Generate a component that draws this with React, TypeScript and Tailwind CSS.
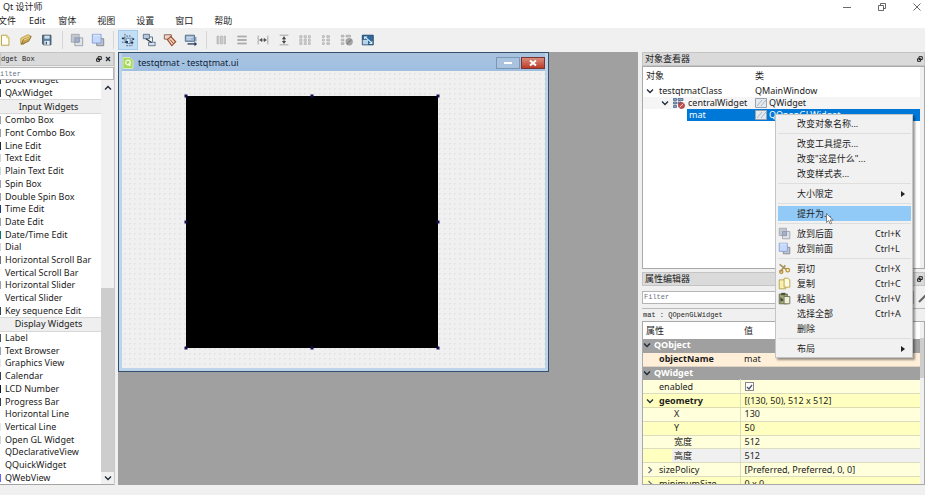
import React from 'react';

type WidgetRow = { label: string; header?: boolean; icon?: string };

const widgetRows: WidgetRow[] = [
  { label: 'Dock Widget', icon: 'bg-gray-700' },
  { label: 'QAxWidget', icon: 'bg-gray-700' },
  { label: 'Input Widgets', header: true },
  { label: 'Combo Box', icon: 'bg-gray-400' },
  { label: 'Font Combo Box', icon: 'bg-gray-400' },
  { label: 'Line Edit', icon: 'bg-gray-800' },
  { label: 'Text Edit', icon: 'bg-gray-300' },
  { label: 'Plain Text Edit', icon: 'bg-gray-300' },
  { label: 'Spin Box', icon: 'bg-gray-400' },
  { label: 'Double Spin Box', icon: 'bg-gray-400' },
  { label: 'Time Edit', icon: 'bg-blue-900' },
  { label: 'Date Edit', icon: 'bg-gray-400' },
  { label: 'Date/Time Edit', icon: 'bg-teal-700' },
  { label: 'Dial', icon: 'bg-gray-300' },
  { label: 'Horizontal Scroll Bar', icon: 'bg-gray-500' },
  { label: 'Vertical Scroll Bar' },
  { label: 'Horizontal Slider', icon: 'bg-gray-400' },
  { label: 'Vertical Slider' },
  { label: 'Key sequence Edit', icon: 'bg-gray-700' },
  { label: 'Display Widgets', header: true },
  { label: 'Label', icon: 'bg-gray-600' },
  { label: 'Text Browser', icon: 'bg-gray-400' },
  { label: 'Graphics View', icon: 'bg-gray-200' },
  { label: 'Calendar', icon: 'bg-gray-700' },
  { label: 'LCD Number', icon: 'bg-gray-900' },
  { label: 'Progress Bar', icon: 'bg-gray-700' },
  { label: 'Horizontal Line' },
  { label: 'Vertical Line', icon: 'bg-gray-200' },
  { label: 'Open GL Widget', icon: 'bg-gray-300' },
  { label: 'QDeclarativeView' },
  { label: 'QQuickWidget' },
  { label: 'QWebView', icon: 'bg-indigo-500' },
];

type MenuEntry = {
  label: string;
  shortcut?: string;
  icon?: React.ReactNode;
  submenu?: boolean;
  active?: boolean;
};

const Icon: React.FC<{ children: React.ReactNode }> = ({ children }) => (
  <svg viewBox="0 0 16 16" className="w-4 h-4 shrink-0" fill="none" aria-hidden="true">
    {children}
  </svg>
);

const NewIcon = () => (
  <Icon>
    <path d="M4 2.5h6l2.500 3v8.500h-8.500z" fill="#fffef0" stroke="#b39a35" />
    <path d="M10 2.500v3h2.500" stroke="#d9c05a" />
  </Icon>
);

const OpenIcon = () => (
  <Icon>
    <path d="M2 6l8-4 3 1v3l-8 7-3-1z" fill="#e9cf7c" stroke="#a98a3c" strokeWidth=".8" />
    <path d="M2.500 13L5 7.500l9-3.500-3 5.500z" fill="#c9a24a" stroke="#7a5f22" strokeWidth=".8" />
    <path d="M5.500 8l7-3" stroke="#f6e3a2" />
  </Icon>
);

const SaveIcon = () => (
  <Icon>
    <path d="M3 2.500h9.500v11H4l-1-1z" fill="#5d7f9e" stroke="#2d4358" />
    <path d="M5 3h6v3.500H5z" fill="#cfe0ea" />
    <path d="M5 9h6v4.500H5z" fill="#e8f0f5" />
    <path d="M6.500 10h1.500v3h-1.500z" fill="#34506a" />
  </Icon>
);

const SendBackIcon = () => (
  <Icon>
    <path d="M5.500 5.500h9v9h-9z" fill="#dfe2e6" stroke="#9a9da4" />
    <path d="M1.500 1.500h9v9h-9z" fill="#c3c7ce" stroke="#a3a6ad" />
    <path d="M5.500 5.500h5v5h-5z" fill="#a4b1cc" stroke="#8b97b0" />
  </Icon>
);

const BringFrontIcon = () => (
  <Icon>
    <path d="M6.500 6.500h8v8h-8z" fill="#c0c4cc" stroke="#7c8088" />
    <path d="M1.500 1.500h10v10h-10z" fill="#c6d9fc" stroke="#7c9bd8" />
    <path d="M2.500 2.500h8" stroke="#e6efff" />
  </Icon>
);

const EditWidgetsIcon = () => (
  <Icon>
    <path d="M4.500 1v10M1 10.500h7M6 3.500h6M12.500 5v10M6 14.500h6" stroke="#3f5c7c" strokeDasharray="2 1" />
    <path d="M6 6h4.500v6H6z" fill="#d7e6f4" stroke="#4b6a8c" strokeWidth=".8" />
    <path d="M1 5h3v2H1zM13 6h2v2h-2zM5 9h3v2.500H5zM11 10h3v2h-3z" fill="#233d5e" />
  </Icon>
);

const SignalsIcon = () => (
  <Icon>
    <path d="M1.500 1.500h7v5h-7z" fill="#b9c9dc" stroke="#566b84" />
    <path d="M7.500 10.500h7.500v4H7.500z" fill="#d5e0ec" stroke="#566b84" />
    <path d="M4.500 6.500L11 11" stroke="#1f3048" strokeWidth="1.300" />
    <path d="M8.500 4.500H12V10" stroke="#4d6682" />
  </Icon>
);

const BuddiesIcon = () => (
  <Icon>
    <path d="M1.500 2h8v5h-8z" fill="#e9d6cc" stroke="#8d5540" />
    <path d="M5 7.500l4-3.500 5.500 6-4.500 4.500z" fill="#f4d0b6" stroke="#9a4b30" strokeWidth="1.300" />
    <path d="M8 7.500l3.500 4" stroke="#7a3f2b" />
  </Icon>
);

const TabOrderIcon = () => (
  <Icon>
    <path d="M1.500 2.500h10.500v7H1.500z" fill="#9db8d4" stroke="#4c6786" />
    <path d="M3 5h7M3 7h5" stroke="#d7e5f2" />
    <path d="M4 12.500h9" stroke="#203a5a" strokeWidth="1.500" />
    <path d="M12 10l3 2.500-3 2.500z" fill="#203a5a" />
    <path d="M13.500 4.500v5" stroke="#4c6786" />
  </Icon>
);

const HLayoutIcon = () => (
  <Icon>
    <path d="M3.500 3.500h2v9h-2zM7.500 3.500h2v9h-2zM11.500 3.500h1.500v9h-1.500z" stroke="#b3b3b3" fill="#d4d4d4" />
  </Icon>
);

const VLayoutIcon = () => (
  <Icon>
    <path d="M3 3.500h10v1H3zM3 7.500h10v1H3zM3 11.500h10v1H3z" stroke="#a3a3a3" fill="#d4d4d4" />
  </Icon>
);

const HSplitIcon = () => (
  <Icon>
    <path d="M2.500 3v10M13.500 3v10" stroke="#999" />
    <path d="M4 8h8" stroke="#555" />
    <path d="M7 5.500v5L4 8zM9 5.500v5L12 8z" fill="#555" />
  </Icon>
);

const VSplitIcon = () => (
  <Icon>
    <path d="M3 2.500h10M3 13.500h10" stroke="#999" />
    <path d="M8 4v8" stroke="#444" />
    <path d="M5.500 7h5L8 4zM5.500 9h5L8 12z" fill="#444" />
  </Icon>
);

const GridIcon = () => (
  <Icon>
    <path d="M2 3h2.500v2.500H2zM7 3h2.500v2.500H7zM12 3h2v2.500h-2zM2 7h2.500v2.500H2zM7 7h2.500v2.500H7zM12 7h2v2.500h-2zM2 11h2.500v2H2zM7 11h2.500v2H7zM12 11h2v2h-2z" fill="#d8d8d8" stroke="#aaa" strokeWidth=".8" />
  </Icon>
);

const FormLayoutIcon = () => (
  <Icon>
    <path d="M4 3h2v2H4zM9 3h3v2H9zM4 7h2v2H4zM9 7h3v2H9zM4 11h2v2H4zM9 11h3v2H9z" fill="#cfcfcf" stroke="#aaa" strokeWidth=".8" />
  </Icon>
);

const BreakLayoutIcon = () => (
  <Icon>
    <path d="M1.500 2.500h3v2h-3zM7 2.500h5v2H7zM1.500 7h3v2h-3zM1.500 11h3v2h-3z" fill="#c9c9c9" stroke="#a5a5a5" strokeWidth=".8" />
    <circle cx="10.500" cy="10" r="4.200" fill="#a3a3a3" />
    <path d="M8 12.500l5-5" stroke="#858585" strokeWidth="1.500" />
  </Icon>
);

const AdjustSizeIcon = () => (
  <Icon>
    <path d="M1.500 2.500h12.500v11H1.500z" fill="#316a9c" stroke="#1d4268" />
    <path d="M2 8h6v5H2z" fill="#b8d3e8" />
    <path d="M5 5l7 6" stroke="#e6f2fb" strokeWidth="1.300" />
    <path d="M3.500 4h4l-4 3.500z" fill="#e6f2fb" />
    <path d="M13 12.500H9l4-3.500z" fill="#e6f2fb" />
  </Icon>
);

const CutIcon = () => (
  <Icon>
    <path d="M2 3l8 6M3 12l6-8" stroke="#a58f55" strokeWidth="1.800" />
    <circle cx="4" cy="12" r="2" stroke="#b98f2c" strokeWidth="1.500" />
    <circle cx="12" cy="10" r="2.200" stroke="#b98f2c" strokeWidth="1.500" />
  </Icon>
);

const CopyIcon = () => (
  <Icon>
    <path d="M1.500 3.500h6l2 2v9h-8z" fill="#f9efb0" stroke="#b39a35" />
    <path d="M7.500 1.500h4.500l2.500 2v9h-7z" fill="#fffbe0" stroke="#b39a35" />
  </Icon>
);

const PasteIcon = () => (
  <Icon>
    <path d="M1.500 2.500h10v12h-10z" fill="#a3a878" stroke="#5a6040" />
    <path d="M4 1h5v3H4z" fill="#4b5138" />
    <path d="M7.500 5.500h7v9h-7z" fill="#f0f0d8" stroke="#5f6548" />
    <path d="M3 6l4 4-4 2z" fill="#3b4a38" />
  </Icon>
);

const WidgetClassIcon = () => (
  <svg viewBox="0 0 12 10" className="w-3 h-[10px] shrink-0" fill="none" aria-hidden="true">
    <path d="M.5.500h11v9H.5z" fill="#e4e9ee" stroke="#9aa3ad" />
    <path d="M2 8l5-6M6 8l5-6" stroke="#a7b5c3" />
  </svg>
);

const CentralIcon = () => (
  <svg viewBox="0 0 12 12" className="w-3 h-3 shrink-0" fill="none" aria-hidden="true">
    <path d="M.5 1.500h3v2h-3zM5 1.500h5v2H5zM.5 5h3v2h-3zM.5 8.500h3v2h-3zM5 5h3v2H5z" fill="#8fa5c6" stroke="#4f658c" strokeWidth=".8" />
    <circle cx="8.500" cy="8.500" r="3" fill="#c9504c" stroke="#8d2a2a" strokeWidth=".7" />
    <path d="M6.500 10.500l4-4" stroke="#f3c9c9" />
  </svg>
);

const Chevron: React.FC<{ className?: string; d?: string }> = ({
  className = 'text-gray-800',
  d = 'M1 2.500l3 3 3-3',
}) => (
  <svg viewBox="0 0 8 8" className={`w-2 h-2 shrink-0 ${className}`} fill="none" stroke="currentColor" strokeWidth="1.300" aria-hidden="true">
    <path d={d} />
  </svg>
);

const CaptionIcon: React.FC<{ d: string }> = ({ d }) => (
  <svg viewBox="0 0 8 8" className="w-2 h-2" fill="none" stroke="#444" strokeWidth=".8" aria-hidden="true">
    <path d={d} />
  </svg>
);

const FloatIcon = () => (
  <svg viewBox="0 0 6 6" className="w-[6px] h-[6px]" fill="none" stroke="#222" aria-hidden="true">
    <path d="M2 .7h3.300v2.800H2zM.6 2.700h3v2.600h-3z" />
  </svg>
);

const contextMenu: MenuEntry[][] = [
  [{ label: '改变对象名称...' }],
  [{ label: '改变工具提示...' }, { label: '改变"这是什么"...' }, { label: '改变样式表...' }],
  [{ label: '大小限定', submenu: true }],
  [{ label: '提升为...', active: true }],
  [
    { label: '放到后面', shortcut: 'Ctrl+K', icon: <SendBackIcon /> },
    { label: '放到前面', shortcut: 'Ctrl+L', icon: <BringFrontIcon /> },
  ],
  [
    { label: '剪切', shortcut: 'Ctrl+X', icon: <CutIcon /> },
    { label: '复制', shortcut: 'Ctrl+C', icon: <CopyIcon /> },
    { label: '粘贴', shortcut: 'Ctrl+V', icon: <PasteIcon /> },
    { label: '选择全部', shortcut: 'Ctrl+A' },
    { label: '删除' },
  ],
  [{ label: '布局', submenu: true }],
];

const toolbarGroups = [
  [
    { name: '新建', icon: <NewIcon /> },
    { name: '打开', icon: <OpenIcon /> },
    { name: '保存', icon: <SaveIcon /> },
  ],
  [
    { name: '放到后面', icon: <SendBackIcon /> },
    { name: '放到前面', icon: <BringFrontIcon /> },
  ],
  [
    { name: '编辑控件', icon: <EditWidgetsIcon />, active: true },
    { name: '编辑信号/槽', icon: <SignalsIcon /> },
    { name: '编辑伙伴', icon: <BuddiesIcon /> },
    { name: '编辑Tab顺序', icon: <TabOrderIcon /> },
  ],
  [
    { name: '水平布局', icon: <HLayoutIcon /> },
    { name: '垂直布局', icon: <VLayoutIcon /> },
    { name: '水平分裂器', icon: <HSplitIcon /> },
    { name: '垂直分裂器', icon: <VSplitIcon /> },
    { name: '栅格布局', icon: <GridIcon /> },
    { name: '表单布局', icon: <FormLayoutIcon /> },
    { name: '打破布局', icon: <BreakLayoutIcon /> },
    { name: '调整大小', icon: <AdjustSizeIcon /> },
  ],
];

const properties = [
  { name: 'X', value: '130', bg: 'bg-[#ffffdc]' },
  { name: 'Y', value: '50', bg: 'bg-[#ffffbf]' },
  { name: '宽度', value: '512', bg: 'bg-[#ffffdc]' },
];

const DockTitle: React.FC<{ title: string; mono?: boolean; closable?: boolean }> = ({ title, mono, closable }) => (
  <div className="flex h-[14px] shrink-0 items-center justify-between border border-[#c4c4c4] bg-[#dadada] pr-px">
    <h2 className={mono ? "font-['Liberation_Mono',monospace] text-[7px]" : 'pl-[2px]'}>{title}</h2>
    <div className="flex items-center gap-[2px]">
      <button type="button" aria-label="浮动" className="flex">
        <FloatIcon />
      </button>
      {closable && (
        <button type="button" aria-label="关闭" className="flex">
          <Chevron d="M2 2l4 4M6 2l-4 4" />
        </button>
      )}
    </div>
  </div>
);

const WidgetBox = () => (
  <aside className="flex w-[115px] shrink-0 flex-col border-r border-[#c8c8c8]">
    <DockTitle title="dget Box" mono closable />
    <input
      aria-label="Filter"
      placeholder="ilter"
      className="mt-px h-[13px] shrink-0 border border-l-0 border-[#b5b5b5] bg-white px-0 font-['Liberation_Mono',monospace] text-[7px] placeholder-gray-500 outline-none"
    />
    <div className="flex min-h-0 flex-1 overflow-hidden border-b border-[#a5a5a5] bg-white">
      <ul className="flex flex-1 flex-col">
        {widgetRows.map((row) => (
          <li
            key={row.label}
            className={`flex min-h-0 flex-1 items-center whitespace-nowrap first:-mt-[6px] ${
              row.header ? 'justify-center border-y border-[#d8d8d8] bg-[#efefef] pr-1' : 'gap-1'
            }`}
          >
            {!row.header && <span className={`h-2 w-px ${row.icon || ''}`} />}
            {row.label}
          </li>
        ))}
      </ul>
      <div className="flex w-[13px] shrink-0 flex-col items-center bg-[#f0f0f0]">
        <div className="flex h-4 items-center">
          <Chevron d="M1 5.500l3-3 3 3" />
        </div>
        <div className="mt-2 flex-1" />
        <div className="w-full flex-1 bg-[#cdcdcd]" />
        <div className="flex h-3 items-center">
          <Chevron />
        </div>
      </div>
    </div>
  </aside>
);

const handles = [
  'left-0 top-0',
  'left-1/2 top-0',
  'left-full top-0',
  'left-0 top-1/2',
  'left-full top-1/2',
  'left-0 top-full',
  'left-1/2 top-full',
  'left-full top-full',
];

const FormWindow = () => (
  <section className="absolute left-0 top-0 flex h-[320px] w-[431px] flex-col border border-[#33506f] bg-[#bcd3ea] px-[3px] pb-[3px]">
    <header className="flex h-[18px] shrink-0 items-center bg-linear-to-b from-[#a9c3df] to-[#9fbfe1] pt-[2px]">
      <svg viewBox="0 0 12 12" className="mr-1 h-3 w-3" fill="none" aria-hidden="true">
        <path d="M1 .5h7l3 3v8H1z" fill="#a6d85a" stroke="#d5ecb4" />
        <circle cx="6" cy="5.500" r="2.300" stroke="#f4fbe8" strokeWidth="1.300" />
        <path d="M6.500 6.500l2 2.500" stroke="#f4fbe8" strokeWidth="1.300" />
      </svg>
      <h2 className="flex-1 text-[#14253a]">testqtmat - testqtmat.ui</h2>
      <button type="button" aria-label="最小化" className="mr-px flex h-3 w-6 items-center justify-center border border-[#7c97b5] bg-[#a9c2de]">
        <span className="h-[2px] w-2 bg-white" />
      </button>
      <button type="button" aria-label="关闭" className="flex h-3 w-6 items-center justify-center border border-[#7a3430] bg-linear-to-b from-[#d98a7b] to-[#bb3a28]">
        <svg viewBox="0 0 8 8" className="h-2 w-2" stroke="#fff" strokeWidth="2" aria-hidden="true">
          <path d="M1 1.500l6 5M7 1.500l-6 5" />
        </svg>
      </button>
    </header>
    <div className="relative flex-1 bg-[#f0f0f0] bg-[radial-gradient(#e4e4e4_1px,transparent_1px)] bg-size-[5px_5px]">
      <div className="absolute left-[64px] top-[25px] h-[252px] w-[252px] bg-black">
        {handles.map((pos) => (
          <span key={pos} className={`absolute h-[3px] w-[3px] -translate-x-1/2 -translate-y-1/2 bg-[#10104a] ${pos}`} />
        ))}
      </div>
    </div>
  </section>
);

const ObjectInspector = () => (
  <section className="flex h-[217px] shrink-0 flex-col">
    <DockTitle title="对象查看器" />
    <div className="flex flex-1 border border-[#a9a9a9] bg-white">
      <div className="flex-1">
        <table className="w-full table-fixed border-collapse leading-[12px]">
          <thead>
            <tr className="h-[18px]">
              <th className="w-[112px] pl-[3px] text-left font-normal">对象</th>
              <th className="text-left font-normal">类</th>
            </tr>
          </thead>
          <tbody>
            <tr className="h-3">
              <td className="p-0">
                <span className="flex items-center gap-[5px] pl-[3px]">
                  <Chevron />
                  testqtmatClass
                </span>
              </td>
              <td className="p-0">QMainWindow</td>
            </tr>
            <tr className="h-3 bg-[#f5f5f5]">
              <td className="p-0">
                <span className="flex items-center gap-[3px] pl-[18px]">
                  <Chevron className="mr-px text-gray-800" />
                  <CentralIcon />
                  centralWidget
                </span>
              </td>
              <td className="p-0">
                <span className="flex items-center gap-[2px]">
                  <WidgetClassIcon />
                  QWidget
                </span>
              </td>
            </tr>
            <tr className="h-3 text-white">
              <td className="p-0 pl-11">
                <span className="block bg-[#0078d7] pl-[2px]">mat</span>
              </td>
              <td className="bg-[#0078d7] p-0">
                <span className="flex items-center gap-[2px]">
                  <WidgetClassIcon />
                  QOpenGLWidget
                </span>
              </td>
            </tr>
          </tbody>
        </table>
      </div>
      <div className="w-1 shrink-0 bg-[#f0f0f0]" />
    </div>
  </section>
);

const PropertyEditor = () => (
  <section className="mt-[3px] flex min-h-0 flex-1 flex-col">
    <DockTitle title="属性编辑器" />
    <div className="flex h-[22px] shrink-0 items-center gap-1">
      <input
        aria-label="属性过滤"
        placeholder="Filter"
        className="h-[13px] min-w-0 flex-1 border border-[#b5b5b5] bg-white px-px font-['Liberation_Mono',monospace] text-[7px] placeholder-gray-500 outline-none"
      />
      <button type="button" aria-label="配置" className="mr-[-3px]">
        <svg viewBox="0 0 10 12" className="h-3 w-[10px]" fill="none" aria-hidden="true">
          <path d="M1 11l8-8" stroke="#666" strokeWidth="2" />
        </svg>
      </button>
    </div>
    <p className="h-[13px] shrink-0 border-t border-[#b9b9b9] px-px font-['Liberation_Mono',monospace] text-[7px] leading-[12px]">
      mat : QOpenGLWidget
    </p>
    <div className="flex min-h-0 flex-1 overflow-hidden border border-[#a9a9a9]">
      <div className="min-w-0 flex-1 overflow-hidden">
        <table className="h-[169px] w-full table-fixed border-collapse leading-[12px]">
          <thead>
            <tr className="h-[17px] bg-white">
              <th className="w-[97px] p-0 pl-[3px] text-left font-normal">属性</th>
              <th className="p-0 pl-1 text-left font-normal">值</th>
            </tr>
          </thead>
          <tbody>
            <tr className="border-b border-[#a0a0a0] bg-[#a0a0a0] text-white">
              <th colSpan={2} className="p-0 text-left">
                <span className="flex items-center gap-[3px]">
                  <Chevron />
                  QObject
                </span>
              </th>
            </tr>
            <tr className="border-b border-[#e0d4c0] bg-[#ffefd9]">
              <th className="p-0 pl-4 text-left">objectName</th>
              <td className="p-0 pl-1">mat</td>
            </tr>
            <tr className="border-b border-[#a0a0a0] bg-[#a0a0a0] text-white">
              <th colSpan={2} className="p-0 text-left">
                <span className="flex items-center gap-[3px]">
                  <Chevron />
                  QWidget
                </span>
              </th>
            </tr>
            <tr className="border-b border-[#dcdcc0] bg-[#ffffdc]">
              <td className="p-0 pl-4">
                <label htmlFor="enabled">enabled</label>
              </td>
              <td className="border-l border-[#dcdcc0] p-0 pl-1">
                <span className="flex h-3 items-center">
                  <input
                    id="enabled"
                    type="checkbox"
                    defaultChecked
                    className="peer h-[9px] w-[9px] appearance-none border border-[#888] bg-white"
                  />
                  <Chevron className="pointer-events-none -ml-[9px] hidden text-gray-600 peer-checked:block" d="M2 4l2 2 3-4" />
                </span>
              </td>
            </tr>
            <tr className="border-b border-[#dcdcb0] bg-[#ffffbf]">
              <th className="p-0 text-left">
                <span className="flex items-center gap-[5px] pl-[3px]">
                  <Chevron />
                  geometry
                </span>
              </th>
              <td className="border-l border-[#dcdcc0] p-0 pl-1">[(130, 50), 512 x 512]</td>
            </tr>
            {properties.map((prop) => (
              <tr key={prop.name} className={`border-b border-[#dcdcc0] ${prop.bg}`}>
                <td className="p-0 pl-[31px]">{prop.name}</td>
                <td className="border-l border-[#dcdcc0] p-0 pl-1">{prop.value}</td>
              </tr>
            ))}
            <tr className="border-b border-[#dcdcc0] bg-[#f0f0f0]">
              <td className="bg-linear-to-r from-[#ffffbf] from-30% to-[#f0f0f0] to-30% p-0 pl-[31px]">高度</td>
              <td className="border-l border-[#dcdcc0] p-0 pl-1">512</td>
            </tr>
            <tr className="border-b border-[#dcdcc0] bg-[#ffffdc]">
              <td className="p-0">
                <span className="flex items-center gap-[5px] pl-[3px]">
                  <Chevron className="text-gray-500" d="M2.500 1l3 3-3 3" />
                  sizePolicy
                </span>
              </td>
              <td className="border-l border-[#dcdcc0] p-0 pl-1">[Preferred, Preferred, 0, 0]</td>
            </tr>
            <tr className="border-b border-[#dcdcc0] bg-[#ffffbf]">
              <td className="p-0">
                <span className="flex items-center gap-[5px] pl-[3px]">
                  <Chevron className="text-gray-500" d="M2.500 1l3 3-3 3" />
                  minimumSize
                </span>
              </td>
              <td className="border-l border-[#dcdcc0] p-0 pl-1">0 x 0</td>
            </tr>
          </tbody>
        </table>
      </div>
      <div className="flex w-1 shrink-0 flex-col bg-[#f0f0f0]">
        <div className="h-4" />
        <div className="h-10 bg-[#cdcdcd]" />
      </div>
    </div>
  </section>
);

const ContextMenu = () => (
  <div
    role="menu"
    className="absolute right-3 top-[114px] w-[138px] border border-[#c4c4c4] bg-[#f1f1f1] py-px pr-px pl-[2px] shadow-[2px_2px_2px_rgba(0,0,0,0.4)]"
  >
    {contextMenu.map((group, index) => (
      <div
        key={index}
        className="border-[#dedede] not-first:mt-[2px] not-first:border-t not-first:pt-[2px]"
      >
        {group.map((item) => (
          <button
            key={item.label}
            type="button"
            role="menuitem"
            className={`flex h-[15px] w-full items-center pr-[9px] text-left whitespace-nowrap ${
              item.active ? 'bg-[#91c9f7]' : ''
            }`}
          >
            <span className="flex w-[19px] shrink-0 [&>svg]:h-[13px] [&>svg]:w-[13px]">{item.icon}</span>
            <span className="flex-1">{item.label}</span>
            {item.shortcut && <span className="w-[27px]">{item.shortcut}</span>}
            {item.submenu && (
              <svg viewBox="0 0 4 6" className="mr-[-3px] h-[6px] w-1" aria-hidden="true">
                <path d="M0 0l4 3-4 3z" fill="#222" />
              </svg>
            )}
          </button>
        ))}
      </div>
    ))}
    <svg viewBox="0 0 8 12" className="pointer-events-none absolute left-[50px] top-[98px] h-3 w-2" aria-hidden="true">
      <path d="M.5.500v9l2.200-2 1.500 3.500 1.500-.7-1.500-3.300h3z" fill="#fff" stroke="#555" strokeWidth=".7" />
    </svg>
  </div>
);

const App: React.FC = () => {
  return (
    <div className="relative flex h-screen flex-col overflow-hidden bg-[#f0f0f0] font-['Noto_Sans','Noto_Sans_CJK_SC',sans-serif] text-[9px] leading-[12px] text-[#1c1c1c]">
      <header className="flex h-[13px] shrink-0 items-center justify-between bg-white pr-1 pl-[3px]">
        <h1>Qt 设计师</h1>
        <div className="flex items-center gap-[27px]">
          <button type="button" aria-label="最小化">
            <CaptionIcon d="M0 4.500h8" />
          </button>
          <button type="button" aria-label="还原">
            <CaptionIcon d="M.5 2.500h5v5h-5zM2.500 2.500V.5h5v5h-2" />
          </button>
          <button type="button" aria-label="关闭">
            <CaptionIcon d="M.5.500l7 7M7.500.500l-7 7" />
          </button>
        </div>
      </header>

      <nav className="flex h-[15px] shrink-0 items-center gap-[21px] bg-white">
        <div className="-ml-[2px] flex gap-[13px]">
          <button type="button">文件</button>
          <button type="button">Edit</button>
          <button type="button">窗体</button>
        </div>
        <button type="button">视图</button>
        <button type="button">设置</button>
        <button type="button">窗口</button>
        <button type="button">帮助</button>
      </nav>

      <div className="-ml-[5px] flex h-6 shrink-0 items-center gap-px">
        {toolbarGroups.map((group, index) => (
          <React.Fragment key={index}>
            {index > 0 && (
              <span className="flex w-2 justify-center">
                <span className="h-[18px] w-px bg-[#d6d6d6]" />
              </span>
            )}
            {group.map((tool) => (
              <button
                key={tool.name}
                type="button"
                aria-label={tool.name}
                className={`flex h-5 w-5 items-center justify-center [&>svg]:h-[14px] [&>svg]:w-[14px] ${
                  'active' in tool && tool.active ? 'border border-[#a3cdf0] bg-[#c4def4]' : ''
                }`}
              >
                {tool.icon}
              </button>
            ))}
          </React.Fragment>
        ))}
      </div>

      <main className="flex min-h-0 flex-1">
        <WidgetBox />
        <div className="relative ml-[3px] flex-1 overflow-hidden bg-[#a0a0a0]">
          <FormWindow />
        </div>
        <aside className="ml-[4px] flex w-[283px] shrink-0 flex-col">
          <ObjectInspector />
          <PropertyEditor />
        </aside>
      </main>

      <footer className="h-[10px] shrink-0" />
      <ContextMenu />
    </div>
  );
};

export default App;
